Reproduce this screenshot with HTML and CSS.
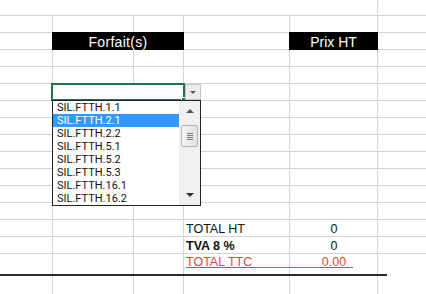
FILE: index.html
```html
<!DOCTYPE html>
<html>
<head>
  <title>Forfaits</title>
  <link rel="stylesheet" href="styles.css">
</head>
<body>
  <div class="sheet">
    <div class="head head-forfait">Forfait(s)</div>
    <div class="head head-prix">Prix HT</div>

    <div class="cell-select">
      <span class="fill-handle"></span>
      <div class="dd-btn"><span class="tri-down"></span></div>
      <div class="dd-list">
        <ul class="dd-items">
          <li>SIL.FTTH.1.1</li>
          <li class="selected">SIL.FTTH.2.1</li>
          <li>SIL.FTTH.2.2</li>
          <li>SIL.FTTH.5.1</li>
          <li>SIL.FTTH.5.2</li>
          <li>SIL.FTTH.5.3</li>
          <li>SIL.FTTH.16.1</li>
          <li>SIL.FTTH.16.2</li>
        </ul>
        <div class="scrollbar">
          <span class="sb-btn"><span class="tri-up"></span></span>
          <span class="sb-thumb"><span class="grip"></span></span>
          <span class="sb-btn sb-down"><span class="tri-down dark"></span></span>
        </div>
      </div>
    </div>

    <div class="label row-ht">TOTAL HT</div>
    <div class="value row-ht">0</div>
    <div class="label row-tva bold">TVA 8 %</div>
    <div class="value row-tva">0</div>
    <div class="label row-ttc red">TOTAL TTC</div>
    <div class="value row-ttc red">0.00</div>

    <div class="total-rule"></div>
    <div class="bottom-rule"></div>
  </div>
</body>
</html>
```

FILE: styles.css
```css
body {
  margin: 0;
  background: #fff;
  font-family: 'Liberation Sans', Arial, sans-serif;
}

/* feuille : quadrillage dessiné en fond */
.sheet {
  position: relative;
  height: 294px;
  overflow: hidden;
  display: grid;
  grid-template-columns: 53px 81px 50px 106px 88px 1fr;
  grid-template-rows: 16px repeat(14, 17px) 22px 1fr;
  background:
    linear-gradient(#d4d4d4, #d4d4d4) 52px 15px / 1px 100% no-repeat,
    linear-gradient(#d4d4d4, #d4d4d4) 133px 15px / 1px 100% no-repeat,
    linear-gradient(#d4d4d4, #d4d4d4) 183px 15px / 1px 100% no-repeat,
    linear-gradient(#d4d4d4, #d4d4d4) 289px 15px / 1px 100% no-repeat,
    linear-gradient(#d4d4d4, #d4d4d4) 377px 0 / 1px 100% no-repeat,
    repeating-linear-gradient(to bottom, #d4d4d4 0 1px, transparent 1px 17px) 0 15px / 100% 239px no-repeat,
    #fff;
}

.head {
  margin: -1px 0 0 -1px;
  background: #000;
  color: #fff;
  font-size: 14px;
  line-height: 16px;
  display: flex;
  align-items: flex-end;
  justify-content: center;
}
.head-forfait {
  grid-row: 3;
  grid-column: 2 / 4;
  letter-spacing: 0.3px;
}
.head-prix {
  grid-row: 3;
  grid-column: 5;
}

/* cellule active + liste de validation */
.cell-select {
  grid-row: 6;
  grid-column: 2 / 4;
  margin: -1px -1px 0 -2px;
  border: 2px solid #217346;
  background: #fff;
  position: relative;
  z-index: 2;
}
.fill-handle {
  position: absolute;
  right: -4px;
  bottom: -4px;
  width: 4px;
  height: 4px;
  background: #217346;
  border: 1px solid #fff;
}
.dd-btn {
  position: absolute;
  top: -1px;
  left: calc(100% + 2px);
  width: 16px;
  height: 16px;
  box-sizing: border-box;
  background: #ececec;
  border: 1px solid #c6c6c6;
  display: flex;
  align-items: center;
  justify-content: center;
}
.tri-down {
  width: 0;
  height: 0;
  border-left: 3px solid transparent;
  border-right: 3px solid transparent;
  border-top: 3px solid #555;
}
.tri-down.dark {
  border-left-width: 4px;
  border-right-width: 4px;
  border-top: 4px solid #333;
}
.tri-up {
  width: 0;
  height: 0;
  border-left: 4px solid transparent;
  border-right: 4px solid transparent;
  border-bottom: 4px solid #555;
}

.dd-list {
  position: absolute;
  top: 15px;
  left: -1px;
  width: 149px;
  height: 106px;
  box-sizing: border-box;
  border: 1px solid #222;
  background: #fff;
  display: flex;
}
.dd-items {
  list-style: none;
  margin: 0;
  padding: 0;
  flex: 1;
  font-family: Roboto, sans-serif;
  font-size: 11px;
  line-height: 13px;
  color: #111;
}
.dd-items li {
  padding-left: 4px;
  height: 13px;
}
.dd-items li.selected {
  background: #3399ff;
  color: #fff;
}
.scrollbar {
  width: 21px;
  background: #f0f0f0;
  display: flex;
  flex-direction: column;
  align-items: center;
}
.sb-btn {
  height: 20px;
  width: 100%;
  display: flex;
  align-items: center;
  justify-content: center;
}
.sb-down {
  margin-top: auto;
}
.sb-thumb {
  margin-top: 4px;
  width: 17px;
  height: 22px;
  box-sizing: border-box;
  background: linear-gradient(to right, #f4f4f4, #e2e2e2);
  border: 1px solid #b8b8b8;
  border-radius: 2px;
  display: flex;
  align-items: center;
  justify-content: center;
}
.grip {
  width: 6px;
  height: 7px;
  background: repeating-linear-gradient(to bottom, #777 0 1px, transparent 1px 2px);
}

/* totaux */
.label {
  grid-column: 4;
  padding-left: 2px;
}
.value {
  grid-column: 5;
  justify-content: center;
}
.label, .value {
  display: flex;
  align-items: flex-end;
  font-size: 12.5px;
  line-height: 16px;
  color: #111;
}
.row-ht { grid-row: 14; }
.row-tva { grid-row: 15; }
.row-ttc {
  grid-row: 16;
  align-items: flex-start;
}
.bold { font-weight: bold; }
.red { color: #e04b2a; }

.total-rule {
  position: absolute;
  left: 186px;
  top: 267px;
  width: 167px;
  height: 1px;
  background: #e04b2a;
}
.bottom-rule {
  position: absolute;
  left: 0;
  top: 274px;
  width: 387px;
  height: 2px;
  background: #2b2b2b;
}
```
